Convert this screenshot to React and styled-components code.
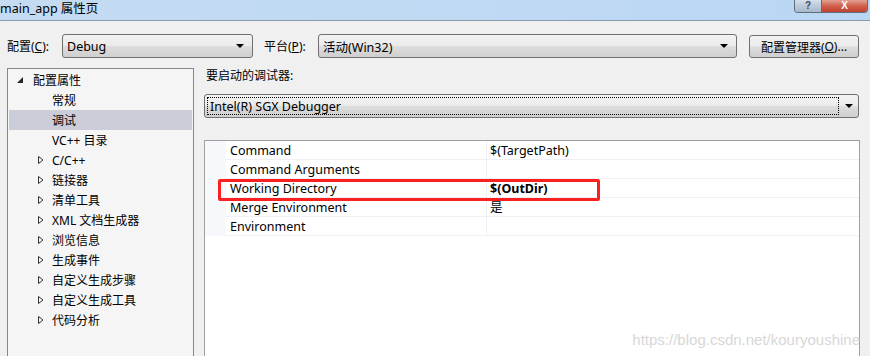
import React from "react";
import styled, { createGlobalStyle } from "styled-components";

const Global = createGlobalStyle`
  html, body { margin: 0; padding: 0; }
  body {
    width: 870px; height: 356px; overflow: hidden;
    font-family: "Noto Sans", "Noto Sans CJK SC", sans-serif;
    font-size: 12px; color: #000;
  }
`;

const Window = styled.div`
  width: 870px; height: 356px; background: #f0f0f0;
  display: flex; flex-direction: column; overflow: hidden; position: relative;
`;

const TitleBar = styled.div`
  height: 20px; flex: none;
  background: linear-gradient(90deg, #c4dbf2 0%, #bfd9f4 60%, #b9d6f3 100%);
  border-bottom: 1px solid #8c9bab;
  display: flex; justify-content: space-between; align-items: flex-start;
`;

const Title = styled.div`
  margin-left: 0; line-height: 18px; font-size: 12.5px; color: #000;
`;

const Caption = styled.div`
  display: flex; margin-right: 2px; height: 12px;
  border: 1px solid #5d6d80; border-top: none;
  border-radius: 0 0 4px 4px; overflow: hidden;
`;

const CapBtn = styled.div`
  width: ${p => p.$w}px; height: 12px;
  background: ${p => p.$close
    ? "linear-gradient(#e3a293 0%, #cf5f4b 50%, #c2412d 100%)"
    : "linear-gradient(#d6e0ec 0%, #bcc9d9 50%, #a9b8ca 100%)"};
  border-left: ${p => p.$close ? "1px solid #5d6d80" : "none"};
  color: ${p => p.$close ? "#fff" : "#3a4a5e"};
  font-family: "Liberation Sans", Arial, sans-serif;
  font-weight: bold; font-size: 10px; line-height: 11px; text-align: center;
`;

const Toolbar = styled.div`
  display: flex; align-items: center; padding: 13px 0 0 7px; height: 24px; flex: none;
`;

const Label = styled.span`
  width: ${p => p.$w}px; flex: none; white-space: nowrap;
`;

const Key = styled.span` text-decoration: underline; `;

const Combo = styled.div`
  box-sizing: border-box; width: ${p => p.$w}px; height: 24px; flex: none;
  border: 1px solid #707070; border-radius: 3px;
  background: linear-gradient(#f2f2f2 0%, #ebebeb 48%, #dddddd 52%, #cfcfcf 100%);
  display: flex; align-items: center; padding: 0 0 0 4px;
  margin-right: ${p => p.$mr || 0}px;
`;

const ComboText = styled.span`
  flex: 1; white-space: nowrap; font-size: 12.5px;
`;

const FocusText = styled.span`
  flex: 1; align-self: stretch; margin: 2px 0 2px -2px; padding-left: 2px;
  border: 1px dotted #000; display: flex; align-items: center; font-size: 12.5px;
`;

const Arrow = styled.div`
  width: 0; height: 0; margin: 0 ${p => p.$mr || 8}px 0 6px;
  border-left: 4px solid transparent; border-right: 4px solid transparent;
  border-top: 4px solid #000;
`;

const Button = styled.div`
  box-sizing: border-box; width: 110px; height: 23px; margin-left: 12px; margin-top: 1px;
  border: 1px solid #707070; border-radius: 3px;
  background: linear-gradient(#f2f2f2 0%, #ebebeb 48%, #dddddd 52%, #cfcfcf 100%);
  display: flex; align-items: center; justify-content: center; white-space: nowrap;
`;

const Main = styled.div`
  display: flex; flex: 1; padding: 10px 0 0 7px; min-height: 0;
`;

const Tree = styled.div`
  box-sizing: border-box; width: 187px; flex: none; height: 300px;
  border: 1px solid #828790; background: #f5f5f5; padding-top: 1px;
`;

const TreeRow = styled.div`
  height: 20px; display: flex; align-items: center; margin: 0 1px;
  padding-left: ${p => p.$indent}px;
  background: ${p => p.$sel ? "#cbcdd9" : "transparent"};
`;

const Twist = styled.svg`
  width: 10px; height: 10px; flex: none; margin-right: ${p => p.$gap}px;
`;

const Right = styled.div`
  margin-left: 10px; width: 656px; display: flex; flex-direction: column;
`;

const SectionLabel = styled.div`
  height: 14px; line-height: 14px; margin: 1px 0 0 2px;
`;

const DebuggerRow = styled.div` margin-top: 11px; `;

const Grid = styled.div`
  box-sizing: border-box; margin-top: 22px; width: 656px; flex: 1;
  border: 1px solid #a0a0a0; border-bottom: none; background: #fff; position: relative;
`;

const PropRow = styled.div`
  display: grid; grid-template-columns: 21px 261px 1fr; height: 19px;
`;

const Gutter = styled.div` background: #f7f8fb; `;

const Cell = styled.div`
  border-bottom: 1px solid #eef0f6;
  border-right: ${p => p.$name ? "1px solid #eef0f6" : "none"};
  padding: 1px 0 0 ${p => p.$name ? 4 : 3}px;
  line-height: 17px; white-space: nowrap; font-size: 12.5px;
  font-weight: ${p => p.$bold ? "bold" : "normal"};
`;

const Highlight = styled.div`
  position: absolute; left: 13px; top: 38px; width: 382px; height: 22px;
  box-sizing: border-box; border: 3px solid #fb2020; border-radius: 2px;
  pointer-events: none;
`;

const Watermark = styled.div`
  position: absolute; right: 10px; bottom: 8px;
  font-family: "Liberation Sans", Arial, sans-serif; font-size: 15px; color: #d7d7d7;
`;

const expandedIcon = (
  <Twist $gap={8} viewBox="0 0 10 10"><polygon points="2,8 8,8 8,2" fill="#262626" /></Twist>
);
const collapsedIcon = (
  <Twist $gap={6} viewBox="0 0 10 10"><polygon points="2.5,1.5 7,5 2.5,8.5" fill="none" stroke="#333" strokeWidth="1" /></Twist>
);

const tree = [
  { t: "配置属性", indent: 6, icon: "open" },
  { t: "常规", indent: 43 },
  { t: "调试", indent: 43, sel: true },
  { t: "VC++ 目录", indent: 43 },
  { t: "C/C++", indent: 27, icon: "closed" },
  { t: "链接器", indent: 27, icon: "closed" },
  { t: "清单工具", indent: 27, icon: "closed" },
  { t: "XML 文档生成器", indent: 27, icon: "closed" },
  { t: "浏览信息", indent: 27, icon: "closed" },
  { t: "生成事件", indent: 27, icon: "closed" },
  { t: "自定义生成步骤", indent: 27, icon: "closed" },
  { t: "自定义生成工具", indent: 27, icon: "closed" },
  { t: "代码分析", indent: 27, icon: "closed" },
];

const props = [
  { n: "Command", v: "$(TargetPath)" },
  { n: "Command Arguments", v: "" },
  { n: "Working Directory", v: "$(OutDir)", bold: true },
  { n: "Merge Environment", v: "是" },
  { n: "Environment", v: "" },
];

export default function App() {
  return (
    <>
      <Global />
      <Window>
        <TitleBar>
          <Title>main_app 属性页</Title>
          <Caption>
            <CapBtn $w={26}>?</CapBtn>
            <CapBtn $w={45} $close>X</CapBtn>
          </Caption>
        </TitleBar>
        <Toolbar>
          <Label $w={55}>配置(<Key>C</Key>):</Label>
          <Combo $w={191} $mr={11}>
            <ComboText>Debug</ComboText>
            <Arrow />
          </Combo>
          <Label $w={54}>平台(<Key>P</Key>):</Label>
          <Combo $w={419}>
            <ComboText>活动(Win32)</ComboText>
            <Arrow />
          </Combo>
          <Button>配置管理器(<Key>O</Key>)...</Button>
        </Toolbar>
        <Main>
          <Tree>
            {tree.map((r, i) => (
              <TreeRow key={i} $indent={r.indent} $sel={r.sel}>
                {r.icon === "open" && expandedIcon}
                {r.icon === "closed" && collapsedIcon}
                <span>{r.t}</span>
              </TreeRow>
            ))}
          </Tree>
          <Right>
            <SectionLabel>要启动的调试器:</SectionLabel>
            <DebuggerRow>
              <Combo $w={655}>
                <FocusText>Intel(R) SGX Debugger</FocusText>
                <Arrow $mr={5} />
              </Combo>
            </DebuggerRow>
            <Grid>
              {props.map((p, i) => (
                <PropRow key={i}>
                  <Gutter />
                  <Cell $name>{p.n}</Cell>
                  <Cell $bold={p.bold}>{p.v}</Cell>
                </PropRow>
              ))}
              <Highlight />
            </Grid>
          </Right>
        </Main>
        <Watermark>https://blog.csdn.net/kouryoushine</Watermark>
      </Window>
    </>
  );
}
